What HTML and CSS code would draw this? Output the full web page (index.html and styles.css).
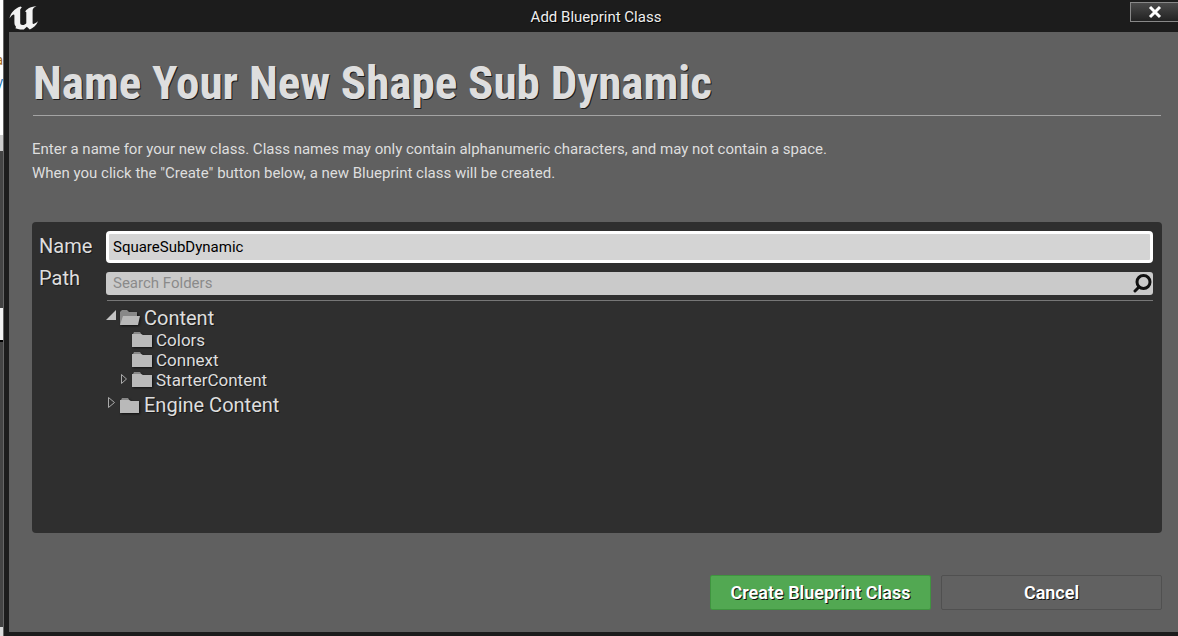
FILE: index.html
```
<!DOCTYPE html>
<html lang="en">
<head>
  <meta charset="UTF-8" />
  <meta name="viewport" content="width=device-width, initial-scale=1" />
  <title>Add Blueprint Class</title>
  <link rel="stylesheet" href="styles.css">
</head>
<body>
  <!-- Sliver of the editor behind the dialog -->
  <div class="backdrop" aria-hidden="true">
    <div class="strip-page"><span>a</span><span>y</span></div>
    <div class="strip-bar"></div>
    <div class="strip-panel"></div>
    <div class="strip-field"></div>
    <div class="strip-panel strip-fill"></div>
    <div class="strip-bar strip-last"></div>
  </div>

  <div class="dialog" role="dialog" aria-labelledby="dialogTitle">
    <div class="titlebar">
      <svg class="logo" viewBox="0 0 30 26" aria-hidden="true">
        <path d="M0.500 14.500C1.500 9 5.500 4.500 11.500 2.500L12.800 3.200L11.200 5.500V18.500C11.200 20.300 12 21 13.500 21C15.300 21 16.300 20.300 17.300 19.200V8.500C17.300 7.700 16.800 7.500 16 7.900C17.300 5.300 20.500 3 27.500 2C25 3.300 23.600 4.700 23.600 6.500V19C23.600 20.500 25 20.500 29 17.200C27.500 21 24.500 23.800 20.800 25.500L17.800 22.800L14.800 25.500C11 25.700 7.500 25 6 24C7.300 23.700 7.300 23 6.500 22C5.700 21 5.400 20 5.400 18V11.500C5.400 9.300 2.700 11 0.500 14.500Z" />
      </svg>
      <span id="dialogTitle" class="dialog-title">Add Blueprint Class</span>
      <button type="button" class="close-btn" aria-label="Close">
        <svg viewBox="0 0 14 14" width="14" height="14"><path d="M2 2L12 12M12 2L2 12" /></svg>
      </button>
    </div>

    <form class="content">
      <h1>Name Your New Shape Sub Dynamic</h1>
      <p class="intro">
        Enter a name for your new class. Class names may only contain alphanumeric characters, and may not contain a space.<br />
        When you click the "Create" button below, a new Blueprint class will be created.
      </p>

      <div class="panel">
        <label class="field-label" for="className">Name</label>
        <input type="text" id="className" class="name-input" value="SquareSubDynamic" />

        <label class="field-label path-label" for="folderSearch">Path</label>
        <div class="path-column">
          <div class="search">
            <input type="text" id="folderSearch" placeholder="Search Folders" />
            <svg viewBox="0 0 20 20" width="20" height="20" aria-hidden="true">
              <circle cx="10.500" cy="8" r="6.500" />
              <path d="M6 13L2 17" />
            </svg>
          </div>

          <ul class="tree">
            <li class="root">
              <svg class="arrow" viewBox="0 0 12 20"><path class="solid" d="M-1 12L9 2V12Z" /></svg>
              <svg class="folder" viewBox="0 0 22 20"><path class="back" d="M1 17V4L3 2H8L10 4H18V8Z" /><path d="M1 17L4 8H21L19 17Z" /></svg>
              <span>Content</span>
            </li>
            <li class="child">
              <span class="arrow"></span>
              <svg class="folder" viewBox="0 0 22 20"><path class="back" d="M2 4L3 2H9L11 5H2Z" /><path d="M1 4H10L12 5H21V17H1Z" /></svg>
              <span>Colors</span>
            </li>
            <li class="child">
              <span class="arrow"></span>
              <svg class="folder" viewBox="0 0 22 20"><path class="back" d="M2 4L3 2H9L11 5H2Z" /><path d="M1 4H10L12 5H21V17H1Z" /></svg>
              <span>Connext</span>
            </li>
            <li class="child">
              <svg class="arrow" viewBox="0 0 12 20"><path class="outline" d="M2.500 4.500V13.500L7.500 9Z" /></svg>
              <svg class="folder" viewBox="0 0 22 20"><path class="back" d="M2 4L3 2H9L11 5H2Z" /><path d="M1 4H10L12 5H21V17H1Z" /></svg>
              <span>StarterContent</span>
            </li>
            <li class="root">
              <svg class="arrow" viewBox="0 0 12 20"><path class="outline" d="M1.500 2.500V12.500L7.500 7.500Z" /></svg>
              <svg class="folder" viewBox="0 0 22 20"><path class="back" d="M2 5L3 3H9L11 6H2Z" /><path d="M1 5H10L12 6H20V18H1Z" /></svg>
              <span>Engine Content</span>
            </li>
          </ul>
        </div>
      </div>

      <div class="actions">
        <button type="button" class="btn btn-create">Create Blueprint Class</button>
        <button type="button" class="btn">Cancel</button>
      </div>
    </form>
  </div>
</body>
</html>
```
FILE: styles.css
```
:root {
  --color-frame: #1c1c1c;
  --color-window: #606060;
  --color-panel: #2f2f2f;
  --color-text: #dedede;
  --color-input: #d4d4d4;
  --color-search: #cacaca;
  --color-folder: #b9b9b9;
  --color-create: #52a852;
}

* {
  box-sizing: border-box;
}

body {
  margin: 0;
  min-height: 100vh;
  display: flex;
  background: var(--color-frame);
  color: var(--color-text);
  font-family: Roboto, sans-serif;
  font-size: 15px;
}

/* Editor behind the dialog */
.backdrop {
  flex: 0 0 4px;
  display: flex;
  flex-direction: column;
  overflow: hidden;
  background: #444;
  border-right: 1px solid #666;
}

.strip-page {
  height: 135px;
  padding-top: 49px;
  background: #fff;
  color: #2878b8;
  font-size: 14px;
  line-height: 22px;
}

.strip-page span {
  display: block;
  direction: rtl;
  width: 3px;
}

.strip-page span:first-child {
  color: #a56a20;
}

.strip-bar {
  height: 16px;
  background: #ccc;
}

.strip-panel {
  height: 157px;
}

.strip-field {
  height: 34px;
  background: #f4f4f4;
  border-bottom: 2px solid #000;
}

.strip-fill {
  flex: 1;
}

.strip-last {
  height: 9px;
  background: #ddd;
}

/* Dialog window */
.dialog {
  flex: 1;
  min-width: 0;
  display: flex;
  flex-direction: column;
  padding: 0 0 4px 5px;
  background: var(--color-frame);
}

.titlebar {
  height: 32px;
  display: flex;
  align-items: flex-start;
  text-shadow: 1px 1px 0 #000;
  color: #eee;
}

.logo {
  width: 30px;
  height: 26px;
  margin: 4px 23px 0 0;
  fill: #f2f2f2;
}

.dialog-title {
  flex: 1;
  line-height: 34px;
  text-align: center;
}

.close-btn {
  width: 48px;
  height: 20px;
  margin-top: 2px;
  padding: 0;
  display: flex;
  align-items: center;
  justify-content: center;
  border: 1px solid #888;
  border-right: 0;
  background: linear-gradient(#4a4a4a, #222);
}

.close-btn path {
  stroke: #fff;
  stroke-width: 3;
}

.content {
  flex: 1;
  display: flex;
  flex-direction: column;
  margin: 0;
  padding: 24px 16px 22px 23px;
  background: var(--color-window);
}

h1 {
  margin: 0 1px;
  padding-bottom: 5px;
  border-bottom: 1px solid #a4a4a4;
  font-family: "Roboto Condensed", Roboto, sans-serif;
  font-size: 47px;
  line-height: 54px;
  font-weight: 700;
  text-shadow: 1px 1px 0 #1c1c1c;
}

.intro {
  margin: 21px 0 37px;
  line-height: 24px;
}

.panel {
  flex: 1;
  display: grid;
  grid-template-columns: 67px 1fr;
  grid-template-rows: auto 1fr;
  row-gap: 9px;
  padding: 9px 9px 9px 7px;
  border-radius: 4px;
  background: var(--color-panel);
  text-shadow: 1px 1px 0 #1a1a1a;
}

.field-label {
  font-size: 20px;
  line-height: 30px;
}

.path-label {
  line-height: 12px;
}

.name-input {
  width: 100%;
  height: 32px;
  padding: 0 4px;
  border: 3px solid #fff;
  border-radius: 4px;
  outline: 0;
  background: var(--color-input);
  color: #000;
  font: inherit;
}

.path-column {
  min-width: 0;
}

.search {
  display: flex;
  align-items: center;
  height: 23px;
  border-radius: 3px;
  background: var(--color-search);
}

.search input {
  flex: 1;
  min-width: 0;
  height: 21px;
  padding: 0 7px 2px;
  border: 0;
  outline: 0;
  background: none;
  color: #000;
  font: inherit;
}

.search input::placeholder {
  color: #8a8a8a;
  opacity: 1;
}

.search svg {
  fill: none;
  stroke: #111;
  stroke-width: 3;
  stroke-linecap: round;
}

/* Folder tree */
.tree {
  margin: 5px 0 0 1px;
  padding: 5px 0 0;
  border-top: 1px solid #777;
  list-style: none;
}

.tree li {
  display: flex;
  align-items: center;
  height: 20px;
  font-size: 17px;
}

.tree .root {
  height: 24px;
  font-size: 20px;
}

.tree .child + .root {
  margin-top: 3px;
}

.tree .child {
  padding-left: 12px;
}

.arrow {
  width: 12px;
  height: 20px;
  overflow: visible;
}

.folder {
  width: 22px;
  height: 20px;
  margin-right: 3px;
  fill: var(--color-folder);
  filter: drop-shadow(1px 1px 1px #111);
}

.folder .back {
  fill: #888;
}

.arrow .solid {
  fill: #c4c4c4;
}

.arrow .outline {
  fill: none;
  stroke: #aaa;
}

/* Bottom buttons */
.actions {
  display: flex;
  justify-content: flex-end;
  gap: 10px;
  margin-top: 42px;
}

.btn {
  width: 221px;
  height: 35px;
  border: 1px solid #505050;
  border-radius: 2px;
  background: #616161;
  color: #fff;
  font-family: inherit;
  font-size: 18px;
  font-weight: 600;
  text-shadow: 1px 1px 0 #111;
}

.btn-create {
  border-color: #3f943f;
  background: var(--color-create);
}
```
